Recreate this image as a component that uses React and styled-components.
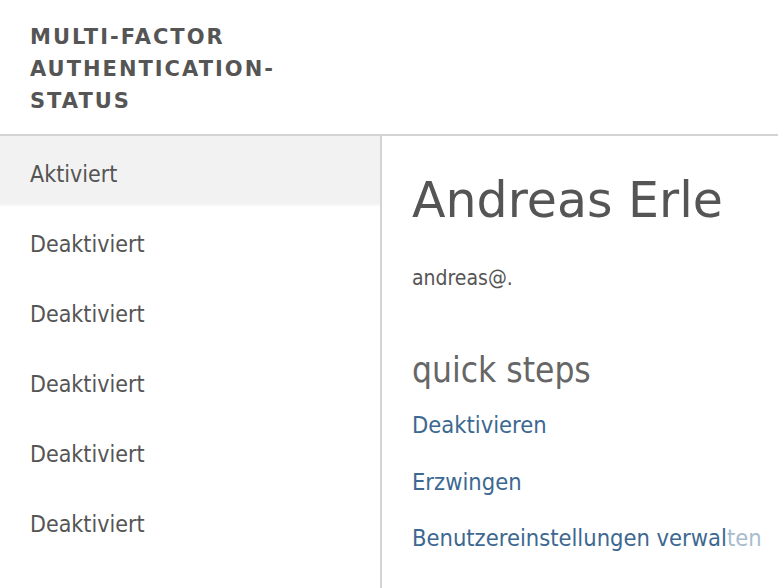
import React from "react";
import styled, { createGlobalStyle } from "styled-components";

const Global = createGlobalStyle`
  html, body { margin: 0; padding: 0; background: #fff; }
  body { font-family: "DejaVu Sans Condensed", "DejaVu Sans", sans-serif; color: #555; overflow: hidden; }
`;

const Page = styled.div`
  width: 778px;
  height: 588px;
  display: flex;
  flex-direction: column;
  overflow: hidden;
`;

const Header = styled.header`
  height: 136px;
  box-sizing: border-box;
  padding: 21px 0 0 30px;
  border-bottom: 2px solid #d4d4d4;
`;

const Title = styled.h1`
  margin: 0;
  width: 290px;
  font-family: "DejaVu Sans", sans-serif;
  font-size: 21px;
  line-height: 32px;
  font-weight: bold;
  letter-spacing: 2px;
  color: #555;
  text-transform: uppercase;
`;

const Body = styled.div`
  flex: 1;
  display: flex;
`;

const Sidebar = styled.ul`
  list-style: none;
  margin: 0;
  padding: 0;
  width: 380px;
  border-right: 2px solid #d4d4d4;
`;

const Row = styled.li`
  height: 70px;
  display: flex;
  align-items: center;
  padding-left: 30px;
  padding-top: 8px;
  box-sizing: border-box;
  font-size: 23px;
  color: #555;
  background: ${(p) => (p.$active ? "#f2f2f2" : "#fff")};
  border-bottom: 2px solid ${(p) => (p.$active ? "#f7f7f7" : "#fff")};
`;

const Detail = styled.section`
  flex: 1;
  padding: 34px 0 0 30px;
  overflow: hidden;
`;

const Name = styled.h2`
  margin: 0;
  font-family: "DejaVu Sans", sans-serif;
  font-size: 49px;
  font-weight: normal;
  color: #555;
  line-height: 62px;
  white-space: nowrap;
`;

const Email = styled.div`
  margin-top: 35px;
  font-size: 21px;
  line-height: 23px;
  color: #555;
`;

const SectionTitle = styled.h3`
  margin: 60px 0 0;
  font-size: 35px;
  font-weight: normal;
  color: #666;
  line-height: 40px;
`;

const Links = styled.div`
  display: flex;
  flex-direction: column;
  gap: 30.5px;
  margin-top: 22px;
`;

const Link = styled.a`
  font-size: 23.5px;
  line-height: 26px;
  color: #3c6891;
  text-decoration: none;
  white-space: nowrap;
`;

const Fade = styled.span`
  color: #a8bccd;
`;

export default function App() {
  const rows = ["Aktiviert", "Deaktiviert", "Deaktiviert", "Deaktiviert", "Deaktiviert", "Deaktiviert"];
  return (
    <Page>
      <Global />
      <Header>
        <Title>Multi-Factor Authentication-Status</Title>
      </Header>
      <Body>
        <Sidebar>
          {rows.map((r, i) => (
            <Row key={i} $active={i === 0}>{r}</Row>
          ))}
        </Sidebar>
        <Detail>
          <Name>Andreas Erle</Name>
          <Email>andreas@.</Email>
          <SectionTitle>quick steps</SectionTitle>
          <Links>
            <Link href="#">Deaktivieren</Link>
            <Link href="#">Erzwingen</Link>
            <Link href="#">Benutzereinstellungen verwal<Fade>ten</Fade></Link>
          </Links>
        </Detail>
      </Body>
    </Page>
  );
}
